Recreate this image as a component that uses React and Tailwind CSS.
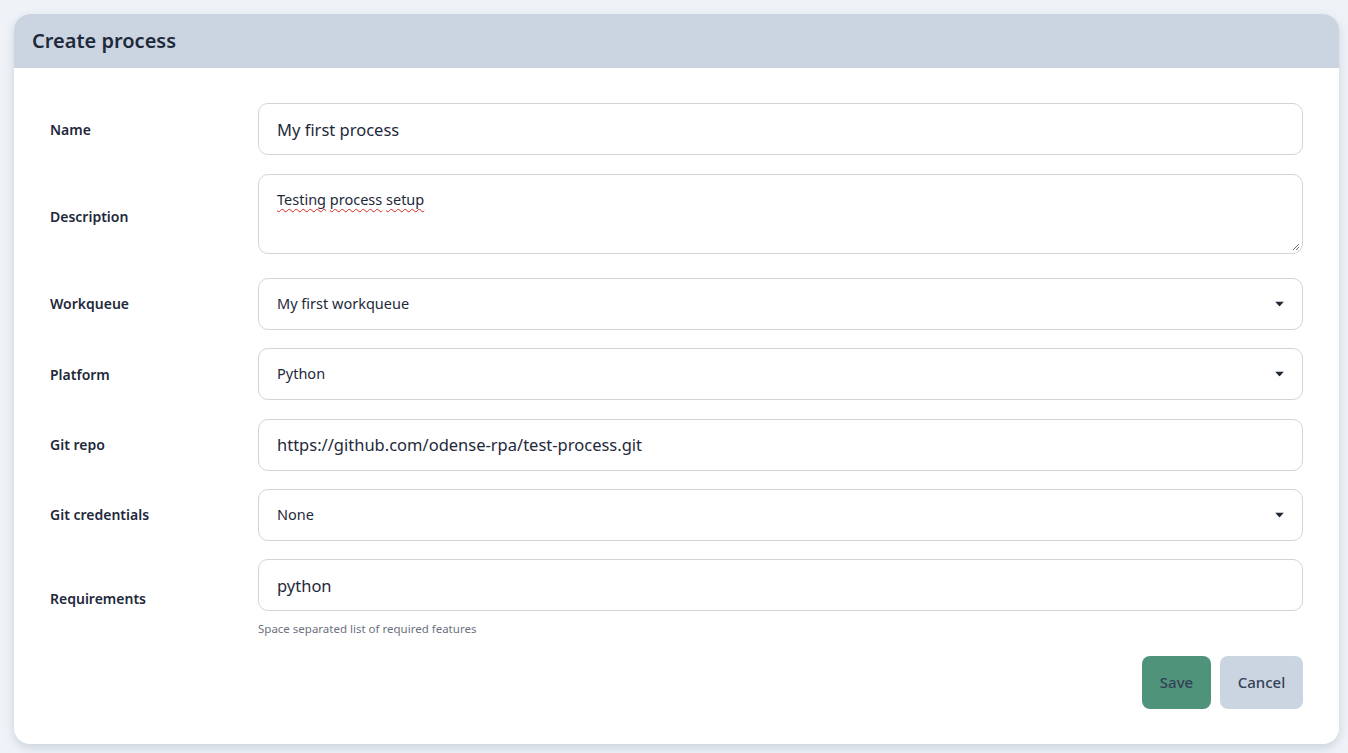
const font = { fontFamily: '"Noto Sans", "Open Sans", sans-serif' };

const Caret = () => (
  <svg width="9" height="5" viewBox="0 0 9 5" className="absolute right-[19px] top-1/2 -translate-y-1/2">
    <path d="M0 0h9L4.5 5z" fill="#1f2937" />
  </svg>
);

const Row = ({ label, children }) => (
  <div className="flex items-center">
    <div className="w-[208px] shrink-0 text-[14px] font-semibold text-[#1e293b]">{label}</div>
    <div className="flex-1">{children}</div>
  </div>
);

const TextInput = ({ value }) => (
  <input
    readOnly
    value={value}
    className="block h-[52px] w-full rounded-[10px] border border-[#d4d4d8] bg-white px-[18px] text-[16.5px] text-[#1e293b] outline-none"
    style={font}
  />
);

const Select = ({ value }) => (
  <div className="relative">
    <select
      defaultValue={value}
      className="block h-[52px] w-full appearance-none rounded-[10px] border border-[#d4d4d8] bg-white px-[18px] text-[14.5px] text-[#1e293b] outline-none"
      style={font}
    >
      <option>{value}</option>
    </select>
    <Caret />
  </div>
);

const Word = ({ children }) => (
  <span className="underline decoration-wavy decoration-[#dc2626] decoration-1 underline-offset-[3px]">{children}</span>
);

const App = () => {
  return (
    <div className="min-h-[753px] bg-[#eff3f8] pt-[14px] pl-[14px] pr-[9px]" style={font}>
      <div className="overflow-hidden rounded-[16px] bg-white shadow-[0_4px_10px_rgba(100,116,139,0.25)]">
        <div className="flex h-[54px] items-center bg-[#cbd5e1] px-[18px]">
          <h1 className="text-[20px] font-semibold text-[#1e293b]">Create process</h1>
        </div>
        <div className="flex flex-col gap-[18.4px] px-[36px] pt-[35px] pb-[35px]">
          <Row label="Name">
            <TextInput value="My first process" />
          </Row>
          <Row label="Description">
            <div className="relative mt-[1px] mb-[5px] h-[80px] w-full rounded-[10px] border border-[#d4d4d8] bg-white px-[18px] pt-[14px] text-[14.5px] text-[#1e293b]">
              <Word>Testing</Word> <Word>process</Word> <Word>setup</Word>
              <svg width="8" height="8" viewBox="0 0 8 8" className="absolute right-[2px] bottom-[2px]">
                <path d="M7 1L1 7M7 4L4 7" stroke="#6b7280" strokeWidth="1" />
              </svg>
            </div>
          </Row>
          <Row label="Workqueue">
            <Select value="My first workqueue" />
          </Row>
          <Row label="Platform">
            <Select value="Python" />
          </Row>
          <Row label="Git repo">
            <TextInput value="https://github.com/odense-rpa/test-process.git" />
          </Row>
          <Row label="Git credentials">
            <Select value="None" />
          </Row>
          <Row label="Requirements">
            <TextInput value="python" />
            <div className="mt-[9px] h-[17px] text-[11.5px] leading-[17px] text-[#6b7280]">Space separated list of required features</div>
          </Row>
          <div className="flex justify-end gap-[9px]">
            <button className="h-[53px] w-[69px] rounded-[8px] bg-[#4f937a] text-[15px] font-medium text-[#334155]">Save</button>
            <button className="h-[53px] w-[83px] rounded-[8px] bg-[#cbd5e1] text-[15px] font-medium text-[#334155]">Cancel</button>
          </div>
        </div>
      </div>
    </div>
  );
};

export default App;
